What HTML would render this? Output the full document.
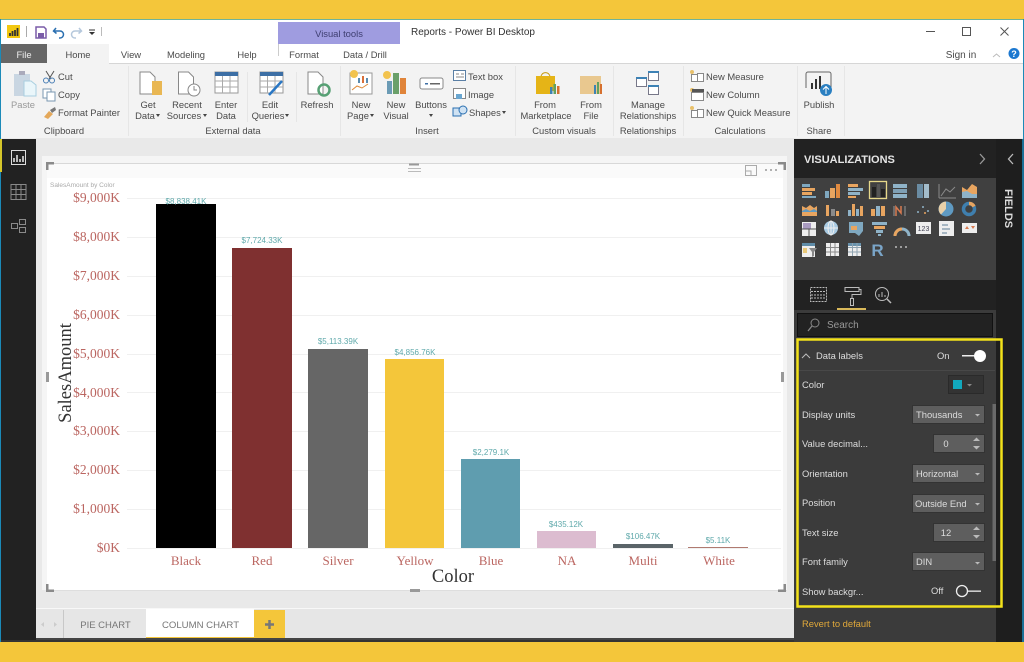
<!DOCTYPE html>
<html><head><meta charset="utf-8"><style>
html,body{margin:0;padding:0;background:#f4c63a;overflow:hidden}
svg{display:block;filter:blur(.3px)}
text{font-family:"Liberation Sans",sans-serif;font-size:9.4px;fill:#4a4a4a}
.c{text-anchor:middle}
.s{font-family:"Liberation Serif",serif;font-size:13px;fill:#bb6661}
.d{font-size:8px;fill:#5fa9ab;text-anchor:middle}
.w{fill:#ddd;font-size:9.4px}
</style></head><body>
<svg width="1024" height="662" viewBox="0 0 1024 662" xmlns="http://www.w3.org/2000/svg">
<rect width="1024" height="662" fill="#f4c63a"/>
<!-- window -->
<rect x="0" y="19" width="1024" height="623" fill="#fff"/>
<rect x="0" y="19" width="1024" height="1" fill="#6fb39a"/>
<rect x="0" y="19" width="1" height="623" fill="#1b8ab8"/>
<rect x="1023" y="19" width="1" height="623" fill="#1b8ab8"/>
<!-- title bar -->
<rect x="7" y="25" width="13" height="13" fill="#f2c811"/>
<path d="M10 36v-3M12.500 36v-5M15 36v-6M17.500 36v-8" stroke="#333" stroke-width="1.800"/>
<rect x="26" y="26" width="1" height="11" fill="#aaa"/>
<path d="M36 27h8l2 2v9H36z" fill="none" stroke="#7a5ca8" stroke-width="1.500"/><rect x="38" y="33" width="6" height="5" fill="#7a5ca8"/>
<path d="M56 28l-2.500 3 3 2.500M54 31h6a3.500 3.500 0 0 1 0 7h-1" fill="none" stroke="#2a6fb0" stroke-width="1.500"/>
<path d="M79 28l2.500 3-3 2.500M81 31h-6a3.500 3.500 0 0 0 0 7h1" fill="none" stroke="#b5c8dc" stroke-width="1.500"/>
<path d="M89 32h6l-3 3z" fill="#333"/><rect x="89" y="29.500" width="6" height="1" fill="#333"/>
<rect x="101" y="27" width="1" height="9" fill="#bbb"/>
<rect x="278" y="22" width="122" height="22" fill="#9f9ce0"/>
<text x="339" y="37" class="c" style="fill:#3e3e70;font-size:9.400px">Visual tools</text>
<text x="411" y="35" style="font-size:10px;fill:#333">Reports - Power BI Desktop</text>
<rect x="926" y="31" width="9" height="1" fill="#555"/>
<rect x="962.500" y="27.500" width="8" height="8" fill="none" stroke="#555"/>
<path d="M1000.500 27.500l8 8M1008.500 27.500l-8 8" stroke="#555"/>
<!-- tabs -->
<rect x="1" y="44" width="46" height="20" fill="#666"/>
<text x="24" y="58" class="c" style="fill:#eee">File</text>
<rect x="47" y="44" width="62" height="20" fill="#f3f3f3"/>
<text x="78" y="58" class="c">Home</text>
<text x="131" y="58" class="c">View</text>
<text x="186" y="58" class="c">Modeling</text>
<text x="247" y="58" class="c">Help</text>
<rect x="278" y="44" width="1" height="12" fill="#ccc"/>
<text x="304" y="58" class="c">Format</text>
<text x="365" y="58" class="c">Data / Drill</text>
<text x="961" y="58" class="c" style="font-size:10px">Sign in</text>
<path d="M993 57l3.500-3 3.500 3" fill="none" stroke="#bbb"/>
<circle cx="1014" cy="53.500" r="5.500" fill="#1c78d0"/><text x="1014" y="57" class="c" style="fill:#fff;font-size:9px;font-weight:bold">?</text>
<!-- ribbon -->
<rect x="1" y="64" width="1022" height="75" fill="#f3f3f3"/>
<rect x="1" y="63" width="46" height="1" fill="#f3f3f3"/><rect x="109" y="63" width="914" height="1" fill="#d6d6d6"/>
<g fill="#e6e6e6"><rect x="128" y="66" width="1" height="70"/><rect x="340" y="66" width="1" height="70"/><rect x="515" y="66" width="1" height="70"/><rect x="613" y="66" width="1" height="70"/><rect x="683" y="66" width="1" height="70"/><rect x="797" y="66" width="1" height="70"/><rect x="844" y="66" width="1" height="70"/><rect x="247" y="72" width="1" height="50"/><rect x="296" y="72" width="1" height="50"/></g>
<!-- paste -->
<rect x="14" y="74" width="16" height="22" fill="#c9d6e2"/><rect x="19" y="71" width="6" height="4" fill="#aab"/><path d="M24 81h7l5 4v11H24z" fill="#eaf6fa" stroke="#a9cfe0"/>
<text x="23" y="108" class="c" style="fill:#999">Paste</text>
<path d="M46 71l5 8M54 71l-5 8" stroke="#555" fill="none"/><circle cx="46" cy="80.500" r="2.500" fill="none" stroke="#4a7fb5"/><circle cx="52" cy="80.500" r="2.500" fill="none" stroke="#4a7fb5"/>
<text x="58" y="80">Cut</text>
<rect x="43" y="89" width="8" height="9" fill="#fff" stroke="#7a97b0"/><rect x="47" y="92" width="8" height="9" fill="#fff" stroke="#7a97b0"/>
<text x="58" y="98">Copy</text>
<path d="M44 117l5-6 4 3-5 5z" fill="#e4a85a"/><path d="M50 110l5-3 1 3-4 3z" fill="#777"/>
<text x="58" y="116">Format Painter</text>
<text x="64" y="134" class="c">Clipboard</text>
<!-- doc icons -->
<g fill="#fff" stroke="#888">
<path d="M140 72h10l5 5v17h-15z"/><path d="M178.500 72h10l5 5v17h-15z"/><path d="M308 72h10l5 5v17h-15z"/>
</g>
<rect x="152" y="81" width="10" height="14" fill="#e9b753"/>
<circle cx="194" cy="90" r="6" fill="#fff" stroke="#888"/><path d="M194 86v4h3" fill="none" stroke="#888"/>
<rect x="215" y="72" width="23" height="21" fill="#fff" stroke="#999"/><rect x="215" y="72" width="23" height="4" fill="#3d6fa5"/><path d="M215 81h23M215 87h23M222.500 76v17M230 76v17" stroke="#aaa"/>
<rect x="260" y="72" width="23" height="21" fill="#fff" stroke="#999"/><rect x="260" y="72" width="23" height="4" fill="#3d6fa5"/><path d="M260 81h23M260 87h23M267.500 76v17M275 76v17" stroke="#aaa"/><path d="M269 95l13-14" stroke="#2a77c4" stroke-width="2.500"/>
<circle cx="324" cy="90" r="5.500" fill="none" stroke="#57a074" stroke-width="2.500"/>
<text x="148" y="108" class="c">Get</text><text x="145" y="119" class="c">Data</text><path d="M156 114h4l-2 3z" fill="#444"/>
<text x="187" y="108" class="c">Recent</text><text x="184" y="119" class="c">Sources</text><path d="M203 114h4l-2 3z" fill="#444"/>
<text x="226" y="108" class="c">Enter</text><text x="226" y="119" class="c">Data</text>
<text x="270" y="108" class="c">Edit</text><text x="268" y="119" class="c">Queries</text><path d="M285 114h4l-2 3z" fill="#444"/>
<text x="317" y="108" class="c">Refresh</text>
<text x="233" y="134" class="c">External data</text>
<!-- insert -->
<rect x="350" y="73" width="22" height="21" fill="#fff" stroke="#999"/><circle cx="354" cy="74" r="4" fill="#f2c34e"/><path d="M352 90l5-4 5 2 6-4" fill="none" stroke="#e08b3a"/><rect x="358" y="78" width="2" height="5" fill="#5a8bb0"/><rect x="362" y="76" width="2" height="7" fill="#d9703a"/><rect x="366" y="78" width="2" height="5" fill="#5a8bb0"/>
<circle cx="387" cy="75" r="4" fill="#f2c34e"/><rect x="387" y="81" width="5" height="13" fill="#6b9bb5"/><rect x="393" y="73" width="6" height="21" fill="#6aa06a"/><rect x="400" y="78" width="6" height="16" fill="#e0843a"/>
<rect x="420" y="78" width="23" height="11" rx="2" fill="#fff" stroke="#888"/><rect x="425" y="83" width="3" height="1.500" fill="#3d6fa5"/><rect x="430" y="83" width="10" height="1.500" fill="#666"/>
<text x="361" y="108" class="c">New</text><text x="358" y="119" class="c">Page</text><path d="M370 114h4l-2 3z" fill="#444"/>
<text x="396" y="108" class="c">New</text><text x="396" y="119" class="c">Visual</text>
<text x="431" y="108" class="c">Buttons</text><path d="M429 114h4l-2 3z" fill="#444"/>
<rect x="453.500" y="70.500" width="12" height="10" fill="#fff" stroke="#5a7fa5"/><path d="M456 74h3M461 74h3M456 77h8" stroke="#888"/>
<text x="468" y="80">Text box</text>
<rect x="453.500" y="88.500" width="12" height="10" fill="#fff" stroke="#888"/><rect x="456" y="94" width="6" height="5" fill="#6aa6d0"/>
<text x="468" y="98">Image</text>
<rect x="453" y="108" width="8" height="8" fill="#cfe2f3" stroke="#2a6fb0"/><circle cx="463" cy="110" r="4" fill="#cfe2f3" stroke="#2a6fb0"/>
<text x="469" y="116">Shapes</text><path d="M502 111h4l-2 3z" fill="#444"/>
<text x="427" y="134" class="c">Insert</text>
<!-- custom visuals -->
<path d="M536 76h19v15h-4v3h-15z" fill="#e5b417"/><path d="M541 76a5 6 0 0 1 9 0" fill="none" stroke="#c69a10"/><rect x="550" y="87" width="2.500" height="7" fill="#3d82b5"/><rect x="553.500" y="84" width="2.500" height="10" fill="#62a060"/><rect x="557" y="86" width="2.500" height="8" fill="#d6702f"/>
<path d="M580 76h21v18h-21z" fill="#e9c88f"/><rect x="594" y="85" width="2" height="9" fill="#3d82b5"/><rect x="597" y="82" width="2" height="12" fill="#62a060"/><rect x="600" y="84" width="2" height="10" fill="#d6702f"/>
<text x="545" y="108" class="c">From</text><text x="546" y="119" class="c">Marketplace</text>
<text x="591" y="108" class="c">From</text><text x="591" y="119" class="c">File</text>
<text x="564" y="134" class="c">Custom visuals</text>
<!-- manage -->
<g fill="#fff" stroke="#778"><rect x="636.500" y="77.500" width="10" height="9"/><rect x="648.500" y="71.500" width="10" height="9"/><rect x="648.500" y="85.500" width="10" height="9"/></g>
<g fill="#3d82b5"><rect x="636" y="77" width="11" height="2"/><rect x="648" y="71" width="11" height="2"/><rect x="648" y="85" width="11" height="2"/></g>
<text x="648" y="108" class="c">Manage</text><text x="648" y="119" class="c">Relationships</text>
<text x="648" y="134" class="c">Relationships</text>
<!-- calculations -->
<g fill="#fff" stroke="#888"><rect x="691.500" y="74.500" width="6" height="7"/><rect x="697.500" y="73.500" width="6" height="8"/><rect x="691.500" y="92.500" width="12" height="8"/><rect x="691.500" y="110.500" width="6" height="7"/><rect x="697.500" y="109.500" width="6" height="8"/></g>
<circle cx="692" cy="72" r="2" fill="#e8c06a"/><circle cx="692" cy="90" r="2" fill="#e8c06a"/><circle cx="692" cy="108" r="2" fill="#e8c06a"/><rect x="692" y="89" width="12" height="3" fill="#555"/>
<text x="706" y="80">New Measure</text>
<text x="706" y="98">New Column</text>
<text x="706" y="116">New Quick Measure</text>
<text x="740" y="134" class="c">Calculations</text>
<!-- publish -->
<path d="M806 88v-14a2 2 0 0 1 2-2h21a2 2 0 0 1 2 2v14" fill="none" stroke="#666"/>
<g fill="#333"><rect x="811" y="83" width="2" height="6"/><rect x="815" y="79" width="2" height="10"/><rect x="819" y="76" width="2" height="13"/></g>
<circle cx="826" cy="90" r="6" fill="#2a7fc1"/><path d="M826 94v-7M823 89.500l3-3 3 3" stroke="#fff" fill="none"/>
<text x="819" y="108" class="c">Publish</text>
<text x="819" y="134" class="c">Share</text>

<!-- canvas -->
<rect x="1" y="138" width="1022" height="502" fill="#e9e9e9"/>
<rect x="1" y="139" width="35" height="501" fill="#222"/>
<rect x="0" y="139" width="2" height="33" fill="#d6c62a"/>
<rect x="11.500" y="150.500" width="14" height="14" fill="none" stroke="#ddd"/><path d="M14 162v-4M17 162v-7M20 162v-3M23 162v-6" stroke="#eee" stroke-width="1.500"/>
<g fill="none" stroke="#8a8a8a"><rect x="11" y="184.500" width="15" height="15"/><path d="M11 189.500h15M11 194.500h15M16 184.500v15M21 184.500v15"/>
<rect x="11.500" y="223.500" width="6" height="5"/><rect x="19.500" y="219.500" width="6" height="5"/><rect x="19.500" y="227.500" width="6" height="5"/></g>
<!-- card -->
<rect x="42" y="156" width="745" height="434" fill="#f5f5f5"/>
<rect x="47" y="163" width="736" height="427" fill="#fff"/>
<rect x="47" y="164" width="736" height="14" fill="#fafafa"/>
<rect x="47" y="163" width="736" height="1" fill="#d8d8d8"/>
<rect x="47" y="590" width="740" height="1" fill="#dedede"/>
<rect x="36" y="608" width="758" height="1" fill="#f8f8f8"/>
<path d="M46 162h8v2.500h-5.500v5.500H46z" fill="#8a8a8a"/>
<path d="M786 162h-8v2.500h5.500v5.500H786z" fill="#8a8a8a"/>
<path d="M46 592h8v-2.500h-5.500V584H46z" fill="#8a8a8a"/>
<path d="M786 592h-8v-2.500h5.500V584H786z" fill="#8a8a8a"/>
<path d="M409 164.500h10" stroke="#999" stroke-width="2"/>
<path d="M408 168.500h13M408 171.500h13" stroke="#bbb"/>
<rect x="46" y="372" width="3" height="10" fill="#999"/><rect x="781" y="372" width="3" height="10" fill="#999"/>
<path d="M410 590.500h10" stroke="#999" stroke-width="3"/>
<rect x="745.500" y="165.500" width="11" height="10" fill="none" stroke="#aaa"/><path d="M745 171h6v5" fill="none" stroke="#aaa"/>
<g fill="#999"><circle cx="766" cy="170" r="1"/><circle cx="771" cy="170" r="1"/><circle cx="776" cy="170" r="1"/></g>
<text x="50" y="187" style="font-size:6.500px;fill:#aaa">SalesAmount by Color</text>
<!-- grid -->
<g fill="#f0f0f0"><rect x="127" y="198" width="654" height="1"/><rect x="127" y="237" width="654" height="1"/><rect x="127" y="276" width="654" height="1"/><rect x="127" y="315" width="654" height="1"/><rect x="127" y="354" width="654" height="1"/><rect x="127" y="392" width="654" height="1"/><rect x="127" y="431" width="654" height="1"/><rect x="127" y="470" width="654" height="1"/><rect x="127" y="509" width="654" height="1"/><rect x="127" y="548" width="654" height="1"/></g>
<g text-anchor="end">
<text x="120" y="202" class="s" style="font-size:13.500px">$9,000K</text>
<text x="120" y="241" class="s" style="font-size:13.500px">$8,000K</text>
<text x="120" y="280" class="s" style="font-size:13.500px">$7,000K</text>
<text x="120" y="319" class="s" style="font-size:13.500px">$6,000K</text>
<text x="120" y="358" class="s" style="font-size:13.500px">$5,000K</text>
<text x="120" y="397" class="s" style="font-size:13.500px">$4,000K</text>
<text x="120" y="435" class="s" style="font-size:13.500px">$3,000K</text>
<text x="120" y="474" class="s" style="font-size:13.500px">$2,000K</text>
<text x="120" y="513" class="s" style="font-size:13.500px">$1,000K</text>
<text x="120" y="552" class="s" style="font-size:13.500px">$0K</text>
</g>
<text transform="translate(71 373) rotate(-90)" text-anchor="middle" style="font-family:'Liberation Serif',serif;font-size:18.500px;fill:#333">SalesAmount</text>
<!-- bars -->
<rect x="156" y="204" width="60" height="344" fill="#000"/>
<rect x="232" y="248" width="60" height="300" fill="#7f3030"/>
<rect x="308" y="349" width="60" height="199" fill="#666"/>
<rect x="385" y="359" width="59" height="189" fill="#f4c63a"/>
<rect x="461" y="459" width="59" height="89" fill="#5f9daf"/>
<rect x="537" y="531" width="59" height="17" fill="#dcbcd0"/>
<rect x="613" y="544" width="60" height="4" fill="#5a6468"/>
<rect x="688" y="547" width="60" height="1" fill="#b07a70"/>
<text x="186" y="204" class="d">$8,838.41K</text>
<text x="262" y="243" class="d">$7,724.33K</text>
<text x="338" y="344" class="d">$5,113.39K</text>
<text x="415" y="355" class="d">$4,856.76K</text>
<text x="491" y="455" class="d">$2,279.1K</text>
<text x="566" y="527" class="d">$435.12K</text>
<text x="643" y="539" class="d">$106.47K</text>
<text x="718" y="543" class="d">$5.11K</text>
<g text-anchor="middle">
<text x="186" y="565" class="s">Black</text>
<text x="262" y="565" class="s">Red</text>
<text x="338" y="565" class="s">Silver</text>
<text x="415" y="565" class="s">Yellow</text>
<text x="491" y="565" class="s">Blue</text>
<text x="567" y="565" class="s">NA</text>
<text x="643" y="565" class="s">Multi</text>
<text x="719" y="565" class="s">White</text>
</g>
<text x="453" y="582" text-anchor="middle" style="font-family:'Liberation Serif',serif;font-size:18.500px;fill:#333">Color</text>
<!-- page tabs -->
<rect x="36" y="609" width="758" height="29" fill="#e6e6e6"/>
<rect x="36" y="638" width="758" height="4" fill="#444"/>
<rect x="63" y="610" width="1" height="28" fill="#c8c8c8"/>
<path d="M44 622l-3 2.500 3 2.500z" fill="#ccc"/><path d="M54 622l3 2.500-3 2.500z" fill="#ccc"/>
<rect x="146" y="609" width="108" height="28" fill="#fff"/><rect x="146" y="637" width="108" height="1" fill="#f4c63a"/>
<text x="105.500" y="628" class="c" style="font-size:9.500px;fill:#777">PIE CHART</text>
<text x="200.500" y="628" class="c" style="font-size:9.600px;fill:#777">COLUMN CHART</text>
<rect x="254" y="610" width="31" height="28" fill="#f4c63a"/>
<path d="M269.500 620v9M265 624.500h9" stroke="#777" stroke-width="2.500"/>
<rect x="1" y="640" width="1022" height="2" fill="#333"/>
<!-- viz panel -->
<rect x="794" y="139" width="202" height="503" fill="#222"/>
<rect x="794" y="178" width="202" height="102" fill="#404040"/>
<text x="804" y="163" style="font-size:11px;font-weight:bold;fill:#e6e6e6">VISUALIZATIONS</text>
<path d="M980 154l4.500 5-4.500 5" fill="none" stroke="#999" stroke-width="1.300"/>
<rect x="996" y="139" width="26" height="503" fill="#1e1e1e"/>
<rect x="1022" y="139" width="2" height="503" fill="#1d6f96"/>
<path d="M1013 154l-4.500 5 4.500 5" fill="none" stroke="#bbb" stroke-width="1.300"/>
<text transform="translate(1005 189) rotate(90)" style="font-size:11px;font-weight:bold;fill:#ddd">FIELDS</text>
<!-- viz icons row 1 -->
<g>
<rect x="802" y="184" width="8" height="3" fill="#7fa8c0"/><rect x="802" y="188" width="13" height="3" fill="#e8a560"/><rect x="802" y="192" width="10" height="3" fill="#e8a560"/><rect x="802" y="196" width="14" height="2" fill="#7fa8c0"/>
<rect x="825" y="191" width="4" height="7" fill="#7fa8c0"/><rect x="830" y="188" width="5" height="10" fill="#e8a560"/><rect x="836" y="184" width="4" height="14" fill="#e08a40"/>
<rect x="848" y="184" width="10" height="3" fill="#e8a560"/><rect x="848" y="188" width="15" height="3" fill="#8fb3c8"/><rect x="848" y="192" width="12" height="3" fill="#8fb3c8"/><rect x="848" y="196" width="8" height="2" fill="#e8a560"/>
<rect x="869.500" y="181.500" width="17" height="17" fill="none" stroke="#e6d88a" stroke-width="1.300"/><rect x="872" y="187" width="4" height="10" fill="#222"/><rect x="877" y="184" width="3" height="13" fill="#555"/><rect x="881" y="189" width="4" height="8" fill="#222"/>
<rect x="893" y="184" width="14" height="4" fill="#8fb3c8"/><rect x="893" y="189" width="14" height="4" fill="#7fa0b5"/><rect x="893" y="194" width="14" height="4" fill="#8fb3c8"/>
<rect x="917" y="184" width="6" height="14" fill="#6a8ca3"/><rect x="924" y="184" width="5" height="14" fill="#a3bccb"/>
<path d="M939 198v-14M939 198h17M941 196l5-7 4 3 5-5" fill="none" stroke="#8a8a8a"/>
<path d="M962 198v-11l5 3 5-6 5 3v11z" fill="#e8a560"/><path d="M962 198v-6l5-1 5 3 5 0v4z" fill="#8fb3c8"/>
</g>
<!-- row 2 -->
<g>
<path d="M802 215v-9l4 2 4-3 4 3 3-2v9z" fill="#e8a560"/><path d="M802 211l4-2 4 2 4-2 3 2v5h-15z" fill="#5f9ac2"/><rect x="802" y="212" width="15" height="4" fill="#e8a560"/>
<rect x="826" y="205" width="3" height="11" fill="#e8a560"/><rect x="831" y="209" width="4" height="7" fill="#8a8a8a"/><rect x="836" y="211" width="3" height="5" fill="#e8a560"/>
<rect x="848" y="210" width="3" height="6" fill="#8fb3c8"/><rect x="852" y="204" width="3" height="12" fill="#e8a560"/><rect x="856" y="209" width="3" height="7" fill="#8fb3c8"/><rect x="860" y="206" width="3" height="10" fill="#e8a560"/>
<rect x="871" y="209" width="4" height="7" fill="#e8a560"/><rect x="876" y="206" width="4" height="10" fill="#8fb3c8"/><rect x="881" y="206" width="4" height="10" fill="#e8a560"/>
<path d="M894 216v-10M905 216v-10" stroke="#999"/><path d="M896 216v-9l5 6v-7" fill="none" stroke="#d87a50" stroke-width="1.500"/>
<g fill="#8fb3c8"><circle cx="918" cy="212" r="1"/><circle cx="923" cy="207" r="1"/><circle cx="928" cy="211" r="1"/></g><circle cx="925" cy="213" r="1" fill="#e8a560"/>
<circle cx="946" cy="209" r="7.500" fill="#5f9ac2"/><path d="M946 209v-7.500a7.500 7.500 0 0 0-5 13z" fill="#e8d0a8"/>
<circle cx="969" cy="209" r="5.500" fill="none" stroke="#3f7fae" stroke-width="3.500"/><path d="M969 203.500a5.500 5.500 0 0 1 5 3" fill="none" stroke="#e8a560" stroke-width="3.500"/>
</g>
<!-- row 3 -->
<g>
<rect x="802" y="222" width="14" height="14" fill="#eee"/><rect x="803" y="223" width="8" height="6" fill="#a99bc0"/><path d="M802 229h14M809 229v7" stroke="#555"/>
<circle cx="831" cy="228" r="7" fill="#a9cbe3"/><path d="M824 228h14M831 221v14" stroke="#eee"/><ellipse cx="831" cy="228" rx="3" ry="7" fill="none" stroke="#eee"/>
<path d="M849 222h14v9l-4 5-4-3h-6z" fill="#7fa8c0"/><path d="M851 226h6v4h-6z" fill="#e8a560"/>
<rect x="872" y="222" width="15" height="3" fill="#8fb3c8"/><rect x="874" y="226" width="11" height="3" fill="#e8a560"/><rect x="876" y="230" width="7" height="3" fill="#8fb3c8"/><rect x="878" y="234" width="3" height="2" fill="#8fb3c8"/>
<path d="M895 236a7 7 0 0 1 14 0" fill="none" stroke="#8fb3c8" stroke-width="3"/><path d="M895 236a7 7 0 0 1 7-7" fill="none" stroke="#e8a560" stroke-width="3"/>
<rect x="916" y="222" width="15" height="12" fill="#eee"/><text x="923.500" y="231" class="c" style="font-size:7px;fill:#445">123</text>
<rect x="939" y="221" width="15" height="15" fill="#eee"/><path d="M942 225h6M942 229h8M942 233h5" stroke="#5f7f95"/>
<rect x="962" y="223" width="15" height="10" fill="#eee"/><path d="M965 229l2-3 2 3zM971 226h4l-2 3z" fill="#d87a50"/>
</g>
<!-- row 4 -->
<g>
<rect x="802" y="243" width="13" height="14" fill="#eee"/><rect x="802" y="243" width="13" height="3" fill="#5f8ca8"/><path d="M809 248h8l-3 4v4l-2 1v-5z" fill="#888"/><rect x="803" y="248" width="4" height="5" fill="#e8c878"/>
<rect x="826" y="243" width="13" height="13" fill="#eee"/><path d="M830.500 243v13M835 243v13M826 247.500h13M826 252h13" stroke="#8a8a8a"/>
<rect x="848" y="243" width="13" height="13" fill="#eee"/><rect x="848" y="243" width="13" height="3" fill="#6a93ad"/><path d="M852.500 243v13M857 243v13M848 247.500h13M848 252h13" stroke="#8fa3b0"/>
<text x="877.500" y="256" class="c" style="font-size:17px;font-weight:bold;fill:#7aa5c8">R</text>
<g fill="#bbb"><circle cx="896" cy="247" r="1"/><circle cx="901" cy="247" r="1"/><circle cx="906" cy="247" r="1"/></g>
</g>
<!-- panel tabs -->
<g fill="none" stroke="#bbb"><rect x="810.500" y="287.500" width="16" height="14" stroke-dasharray="2 1"/><path d="M811 291.500h15M811 295h15M811 298h15" stroke-dasharray="2 1"/>
<path d="M845 287.500h14v4h-14zM859 289.500h2v5h-9v4"/><rect x="850.500" y="298.500" width="3" height="7"/>
<circle cx="882" cy="294" r="6.500"/><path d="M887 299l4 4" stroke-width="1.500"/><path d="M879 297v-3M882 297v-5M885 297v-2"/></g>
<rect x="837" y="308" width="29" height="2" fill="#d9b95a"/>
<!-- search -->
<rect x="794" y="310" width="202" height="332" fill="#3b3b3b"/>
<rect x="797.500" y="313.500" width="195" height="23" fill="#222" stroke="#111"/>
<circle cx="815" cy="323" r="4" fill="none" stroke="#888"/><path d="M812 326l-4 5" stroke="#888" stroke-width="1.300"/>
<text x="827" y="328" style="font-size:10px;fill:#999">Search</text>
<!-- format -->
<rect x="799" y="370" width="196" height="1" fill="#484848"/>
<path d="M802 358l4-4 4 4" fill="none" stroke="#bbb"/>
<text x="816" y="359" class="w">Data labels</text>
<text x="937" y="359" class="w">On</text>
<rect x="962" y="355" width="12" height="1.500" fill="#eee"/><circle cx="980" cy="356" r="6" fill="#fff"/>
<text x="802" y="388" class="w">Color</text>
<rect x="948.500" y="375.500" width="35" height="18" fill="#333" stroke="#2a2a2a"/><rect x="953" y="380" width="9" height="9" fill="#12a8bd"/><path d="M967 384h5l-2.500 2.500z" fill="#888"/>
<text x="802" y="418" class="w">Display units</text>
<rect x="912.500" y="405.500" width="72" height="18" fill="#5e5e5e" stroke="#333"/><text x="916" y="418" class="w">Thousands</text><path d="M975 414h5l-2.500 2.500z" fill="#bbb"/>
<text x="802" y="447" class="w">Value decimal...</text>
<rect x="933.500" y="434.500" width="51" height="18" fill="#5e5e5e" stroke="#333"/><text x="946" y="447" class="w c">0</text><path d="M976 441l3.500-3.500 3.500 3.500zM976 446h7l-3.500 3.500z" fill="#bbb" transform="translate(-3 0)"/>
<text x="802" y="477" class="w">Orientation</text>
<rect x="912.500" y="464.500" width="72" height="18" fill="#5e5e5e" stroke="#333"/><text x="916" y="477" class="w">Horizontal</text><path d="M975 473h5l-2.500 2.500z" fill="#bbb"/>
<text x="802" y="506" class="w">Position</text>
<rect x="912.500" y="494.500" width="72" height="18" fill="#5e5e5e" stroke="#333"/><text x="915" y="507" class="w">Outside End</text><path d="M975 503h5l-2.500 2.500z" fill="#bbb"/>
<text x="802" y="536" class="w">Text size</text>
<rect x="933.500" y="523.500" width="51" height="18" fill="#5e5e5e" stroke="#333"/><text x="946" y="536" class="w c">12</text><path d="M976 530l3.500-3.500 3.500 3.500zM976 535h7l-3.500 3.500z" fill="#bbb" transform="translate(-3 0)"/>
<text x="802" y="565" class="w">Font family</text>
<rect x="912.500" y="552.500" width="72" height="18" fill="#5e5e5e" stroke="#333"/><text x="916" y="565" class="w">DIN</text><path d="M975 562h5l-2.500 2.500z" fill="#bbb"/>
<text x="802" y="595" class="w">Show backgr...</text>
<text x="931" y="594" class="w">Off</text>
<circle cx="962" cy="591" r="5.500" fill="none" stroke="#eee" stroke-width="1.300"/><rect x="968" y="590.500" width="13" height="1.300" fill="#eee"/>
<rect x="992.500" y="404" width="3.500" height="157" fill="#6a6a6a"/>
<rect x="797.500" y="339.500" width="204" height="267" fill="none" stroke="#f3e21a" stroke-width="2.500"/>
<text x="802" y="627" style="font-size:9.400px;fill:#e0a83a">Revert to default</text>
</svg>
</body></html>
